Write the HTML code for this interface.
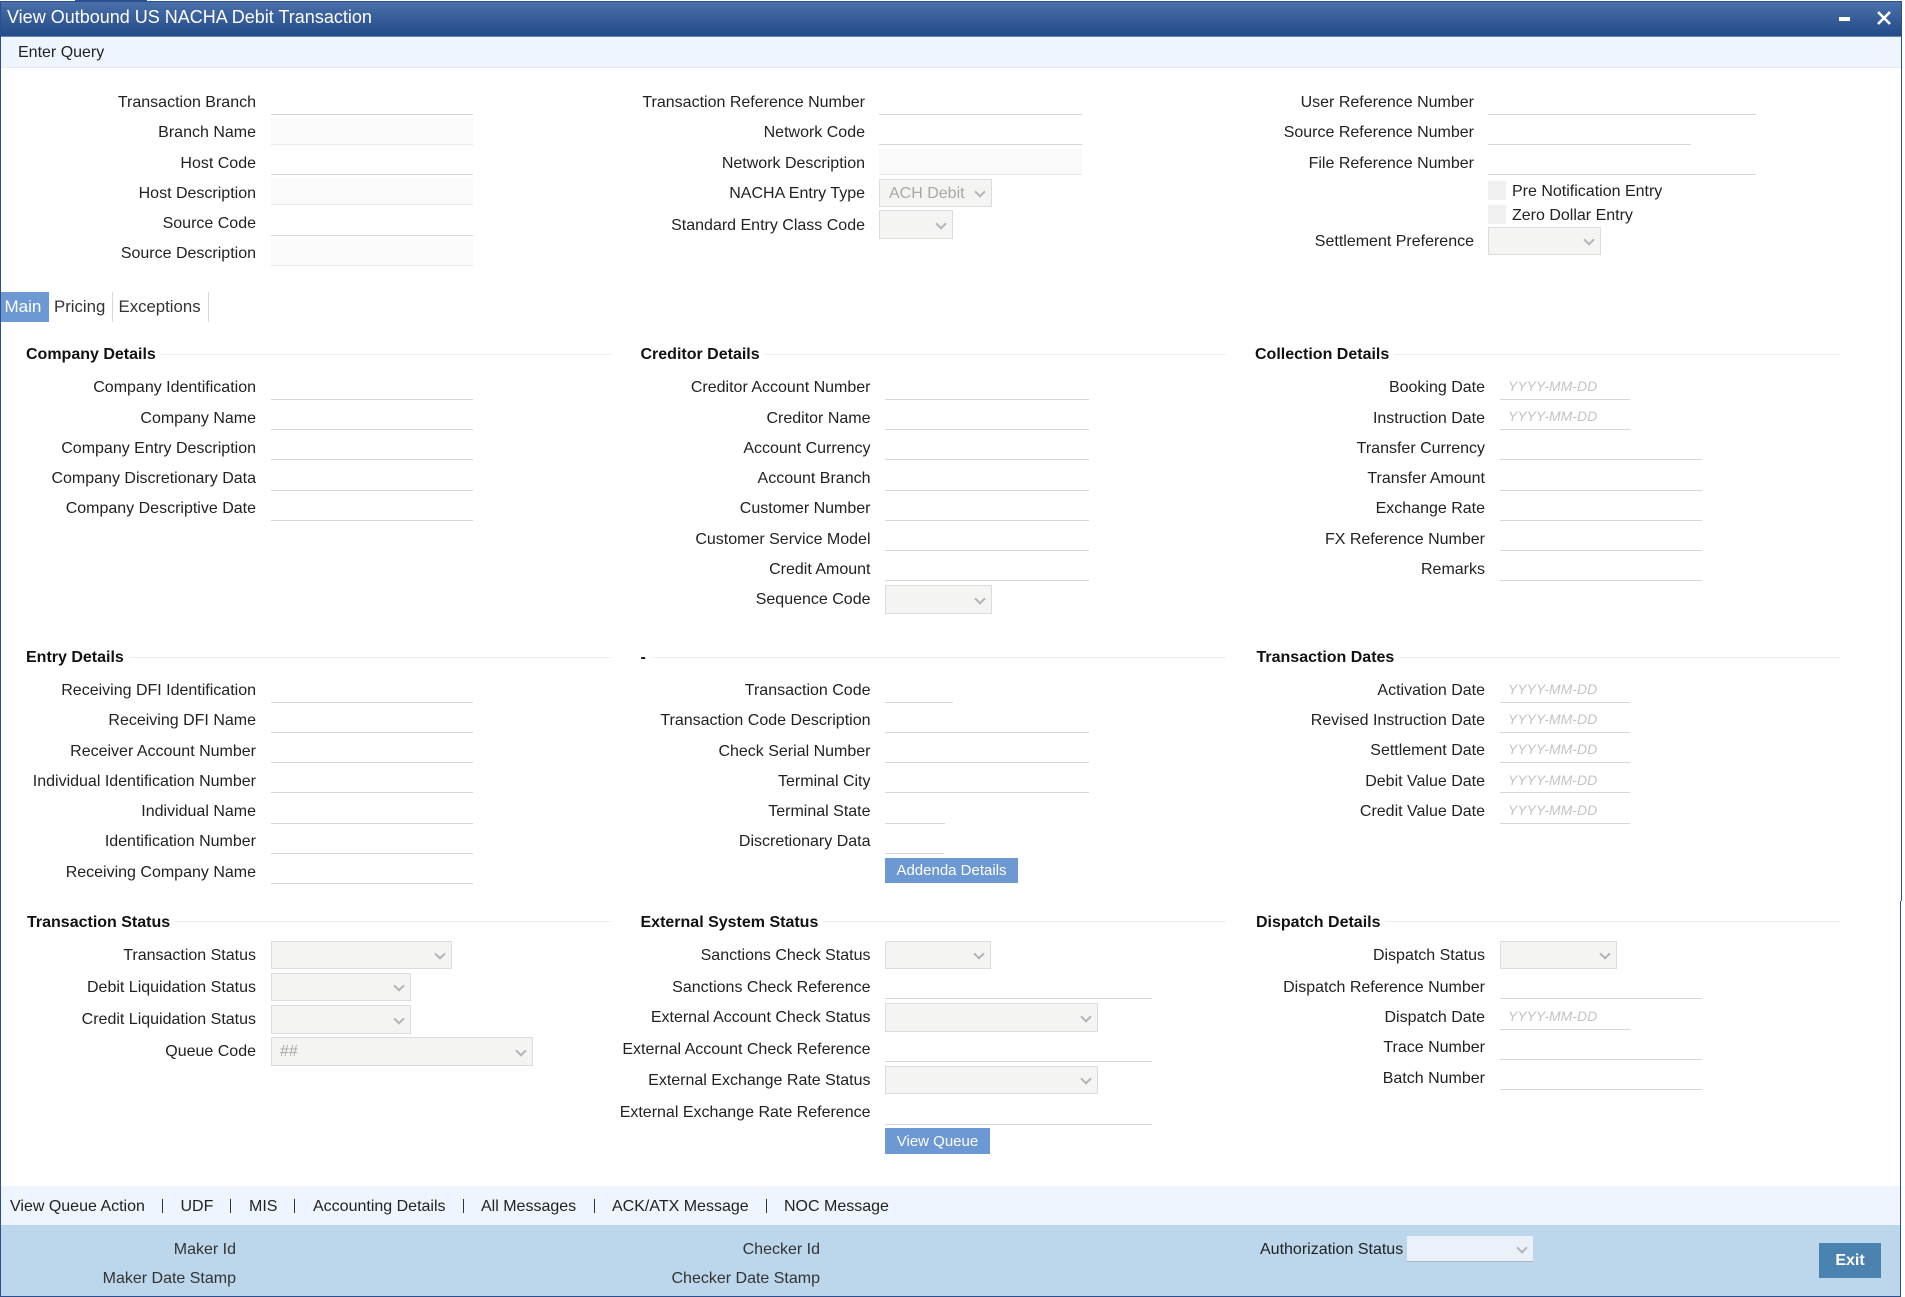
<!DOCTYPE html>
<html lang="en">
<head>
<meta charset="utf-8">
<title>View Outbound US NACHA Debit Transaction</title>
<style>
html,body{margin:0;padding:0;background:#fff}
body{position:relative;width:1905px;height:1297px;overflow:hidden;font-family:"Liberation Sans",Arial,sans-serif;font-size:16px;color:#222}
div{position:absolute;box-sizing:border-box}
.l{white-space:nowrap;line-height:20px;height:20px;margin-top:2px}
.a{right:1649px}.m{right:1034.5px}.k{right:420px}.o{right:1040px}.w{right:431px}
.i{height:1px;background:#d6d6d6}
.x1{left:271px;width:202px}
.x2{left:879px;width:203px}
.x3{left:1488px;width:268px}
.y1{left:885px;width:204px}
.y2{left:1500px;width:202px}
.d{left:1500px;width:130px}
.f{left:271px;width:202px;background:#fafafa}
.s{background:#f4f4f2;border:1px solid #dcdcdc}
.s::after{content:"";position:absolute;right:7px;top:50%;width:6px;height:6px;margin-top:-5px;border-right:2px solid #b0b5b5;border-bottom:2px solid #b0b5b5;transform:rotate(45deg)}
.h{font-weight:bold;line-height:20px;height:20px;white-space:nowrap;background:#fff;padding-right:5px;color:#111;margin-top:2px}
.r{height:1px;background:#eeeeee}
.p{left:1508px;font-style:italic;font-size:14px;color:#c4c4c4;line-height:20px;height:20px;white-space:nowrap}
.t{color:#fff;background:#6c98d3;font-size:15px;text-align:center;line-height:25px}
.q{font-size:16px;line-height:20px;height:20px;top:1197px;white-space:nowrap;color:#222}
.v{top:1199px;width:1px;height:14px;background:#333}
.g{color:#a8a8a8;white-space:nowrap}
.bl{color:#333}
</style>
</head>
<body>

<!-- window frame -->
<div style="left:0;top:1px;width:1902px;height:36px;background:linear-gradient(#4a70a9,#234a8a);border-top:1px solid #2a4f8e;border-bottom:1px solid #6d8aa8"></div>
<div style="left:75px;top:0;width:72px;height:1px;background:#2a4f8e"></div>
<div style="left:7px;top:6px;font-size:18px;line-height:22px;color:#fff;white-space:nowrap">View Outbound US NACHA Debit Transaction</div>
<div style="left:1839px;top:17px;width:11px;height:4px;background:#fff"></div>
<svg style="position:absolute;left:1875px;top:10px" width="16" height="16" viewBox="0 0 16 16"><path d="M3 2L15 14M15 2L3 14" stroke="#fff" stroke-width="2.6" fill="none"/></svg>

<div style="left:0;top:37px;width:1902px;height:31px;background:#eef5fe;border-bottom:1px solid #e6e9ee"></div>
<div style="left:18px;top:43px;line-height:20px;white-space:nowrap">Enter Query</div>

<!-- top col 1 -->
<div class="l a" style="top:91px">Transaction Branch</div><div class="i x1" style="top:114px"></div>
<div class="f" style="top:118px;height:27px"></div><div class="i x1" style="top:144px;background:#e9e9e9"></div>
<div class="l a" style="top:121px">Branch Name</div>
<div class="l a" style="top:152px">Host Code</div><div class="i x1" style="top:174px"></div>
<div class="f" style="top:179px;height:26px"></div><div class="i x1" style="top:204px;background:#e9e9e9"></div>
<div class="l a" style="top:182px">Host Description</div>
<div class="l a" style="top:212px">Source Code</div><div class="i x1" style="top:235px"></div>
<div class="f" style="top:239px;height:27px"></div><div class="i x1" style="top:265px;background:#e9e9e9"></div>
<div class="l a" style="top:242px">Source Description</div>

<!-- top col 2 -->
<div class="l o" style="top:91px">Transaction Reference Number</div><div class="i x2" style="top:114px"></div>
<div class="l o" style="top:121px">Network Code</div><div class="i x2" style="top:144px"></div>
<div class="l o" style="top:152px">Network Description</div>
<div class="x2" style="top:149px;height:26px;background:#fafafa"></div><div class="i x2" style="top:174px;background:#e9e9e9"></div>
<div class="l o" style="top:182px">NACHA Entry Type</div>
<div class="s g" style="left:879px;top:179px;width:113px;height:28px;padding-left:9px;line-height:27px">ACH Debit</div>
<div class="l o" style="top:214px">Standard Entry Class Code</div>
<div class="s" style="left:879px;top:210px;width:74px;height:29px"></div>

<!-- top col 3 -->
<div class="l w" style="top:91px">User Reference Number</div><div class="i x3" style="top:114px"></div>
<div class="l w" style="top:121px">Source Reference Number</div><div class="i" style="left:1488px;width:203px;top:144px"></div>
<div class="l w" style="top:152px">File Reference Number</div><div class="i x3" style="top:174px"></div>
<div style="left:1488px;top:181px;width:18px;height:19px;background:#f1f1f1"></div>
<div class="l" style="left:1512px;top:180px">Pre Notification Entry</div>
<div style="left:1488px;top:205px;width:18px;height:19px;background:#f1f1f1"></div>
<div class="l" style="left:1512px;top:204px">Zero Dollar Entry</div>
<div class="l w" style="top:230px">Settlement Preference</div>
<div class="s" style="left:1488px;top:227px;width:113px;height:28px"></div>

<!-- tabs -->
<div style="left:1px;top:292px;width:48px;height:30px;background:#6c98d3;color:#fff;font-size:17px;padding-left:3.5px;line-height:30px">Main</div>
<div class="l" style="left:54px;top:295px;color:#333;font-size:16.8px">Pricing</div>
<div style="left:112px;top:292px;width:1px;height:30px;background:#d8d8d8"></div>
<div class="l" style="left:118.5px;top:295px;color:#333;font-size:16.8px">Exceptions</div>
<div style="left:208px;top:292px;width:1px;height:30px;background:#d8d8d8"></div>

<!-- row 1 rules -->
<div class="r" style="left:26px;width:585px;top:354px"></div>
<div class="r" style="left:641px;width:585px;top:354px"></div>
<div class="r" style="left:1256px;width:584px;top:354px"></div>
<div class="h" style="left:26px;top:343px">Company Details</div>
<div class="h" style="left:640.5px;top:343px">Creditor Details</div>
<div class="h" style="left:1255px;top:343px">Collection Details</div>

<!-- Company -->
<div class="l a" style="top:376px">Company Identification</div><div class="i x1" style="top:399px"></div>
<div class="l a" style="top:407px">Company Name</div><div class="i x1" style="top:429px"></div>
<div class="l a" style="top:437px">Company Entry Description</div><div class="i x1" style="top:459px"></div>
<div class="l a" style="top:467px">Company Discretionary Data</div><div class="i x1" style="top:490px"></div>
<div class="l a" style="top:497px">Company Descriptive Date</div><div class="i x1" style="top:520px"></div>

<!-- Creditor -->
<div class="l m" style="top:376px">Creditor Account Number</div><div class="i y1" style="top:399px"></div>
<div class="l m" style="top:407px">Creditor Name</div><div class="i y1" style="top:429px"></div>
<div class="l m" style="top:437px">Account Currency</div><div class="i y1" style="top:459px"></div>
<div class="l m" style="top:467px">Account Branch</div><div class="i y1" style="top:490px"></div>
<div class="l m" style="top:497px">Customer Number</div><div class="i y1" style="top:520px"></div>
<div class="l m" style="top:528px">Customer Service Model</div><div class="i y1" style="top:550px"></div>
<div class="l m" style="top:558px">Credit Amount</div><div class="i y1" style="top:580px"></div>
<div class="l m" style="top:588px">Sequence Code</div>
<div class="s" style="left:885px;top:585px;width:107px;height:29px"></div>

<!-- Collection -->
<div class="l k" style="top:376px">Booking Date</div><div class="p" style="top:376px">YYYY-MM-DD</div><div class="i d" style="top:399px"></div>
<div class="l k" style="top:407px">Instruction Date</div><div class="p" style="top:406px">YYYY-MM-DD</div><div class="i d" style="top:429px"></div>
<div class="l k" style="top:437px">Transfer Currency</div><div class="i y2" style="top:459px"></div>
<div class="l k" style="top:467px">Transfer Amount</div><div class="i y2" style="top:490px"></div>
<div class="l k" style="top:497px">Exchange Rate</div><div class="i y2" style="top:520px"></div>
<div class="l k" style="top:528px">FX Reference Number</div><div class="i y2" style="top:550px"></div>
<div class="l k" style="top:558px">Remarks</div><div class="i y2" style="top:580px"></div>

<!-- row 2 rules -->
<div class="r" style="left:26px;width:585px;top:657px"></div>
<div class="r" style="left:641px;width:585px;top:657px"></div>
<div class="r" style="left:1257px;width:583px;top:657px"></div>
<div class="h" style="left:26px;top:646px">Entry Details</div>
<div class="h" style="left:640.5px;top:646px">-</div>
<div class="h" style="left:1256.5px;top:646px">Transaction Dates</div>

<!-- Entry -->
<div class="l a" style="top:679px">Receiving DFI Identification</div><div class="i x1" style="top:702px"></div>
<div class="l a" style="top:709px">Receiving DFI Name</div><div class="i x1" style="top:732px"></div>
<div class="l a" style="top:740px">Receiver Account Number</div><div class="i x1" style="top:762px"></div>
<div class="l a" style="top:770px">Individual Identification Number</div><div class="i x1" style="top:792px"></div>
<div class="l a" style="top:800px">Individual Name</div><div class="i x1" style="top:823px"></div>
<div class="l a" style="top:830px">Identification Number</div><div class="i x1" style="top:853px"></div>
<div class="l a" style="top:861px">Receiving Company Name</div><div class="i x1" style="top:883px"></div>

<!-- Middle -->
<div class="l m" style="top:679px">Transaction Code</div><div class="i" style="left:885px;width:68px;top:702px"></div>
<div class="l m" style="top:709px">Transaction Code Description</div><div class="i y1" style="top:732px"></div>
<div class="l m" style="top:740px">Check Serial Number</div><div class="i y1" style="top:762px"></div>
<div class="l m" style="top:770px">Terminal City</div><div class="i y1" style="top:792px"></div>
<div class="l m" style="top:800px">Terminal State</div><div class="i" style="left:885px;width:60px;top:823px"></div>
<div class="l m" style="top:830px">Discretionary Data</div><div class="i" style="left:885px;width:59px;top:853px"></div>
<div class="t" style="left:885px;top:858px;width:133px;height:25px">Addenda Details</div>

<!-- Transaction Dates -->
<div class="l k" style="top:679px">Activation Date</div><div class="p" style="top:679px">YYYY-MM-DD</div><div class="i d" style="top:702px"></div>
<div class="l k" style="top:709px">Revised Instruction Date</div><div class="p" style="top:709px">YYYY-MM-DD</div><div class="i d" style="top:732px"></div>
<div class="l k" style="top:739px">Settlement Date</div><div class="p" style="top:739px">YYYY-MM-DD</div><div class="i d" style="top:762px"></div>
<div class="l k" style="top:770px">Debit Value Date</div><div class="p" style="top:770px">YYYY-MM-DD</div><div class="i d" style="top:792px"></div>
<div class="l k" style="top:800px">Credit Value Date</div><div class="p" style="top:800px">YYYY-MM-DD</div><div class="i d" style="top:823px"></div>

<!-- row 3 rules -->
<div class="r" style="left:27px;width:584px;top:921px"></div>
<div class="r" style="left:641px;width:585px;top:921px"></div>
<div class="r" style="left:1256px;width:584px;top:921px"></div>
<div class="h" style="left:27px;top:911px">Transaction Status</div>
<div class="h" style="left:640.5px;top:911px">External System Status</div>
<div class="h" style="left:1256px;top:911px">Dispatch Details</div>

<!-- Transaction Status -->
<div class="l a" style="top:944px">Transaction Status</div>
<div class="s" style="left:271px;top:941px;width:181px;height:28px"></div>
<div class="l a" style="top:976px">Debit Liquidation Status</div>
<div class="s" style="left:271px;top:973px;width:140px;height:28px"></div>
<div class="l a" style="top:1008px">Credit Liquidation Status</div>
<div class="s" style="left:271px;top:1005px;width:140px;height:29px"></div>
<div class="l a" style="top:1040px">Queue Code</div>
<div class="s g" style="left:271px;top:1037px;width:262px;height:29px;padding-left:8px;line-height:27px">##</div>

<!-- External System -->
<div class="l m" style="top:944px">Sanctions Check Status</div>
<div class="s" style="left:885px;top:941px;width:106px;height:28px"></div>
<div class="l m" style="top:976px">Sanctions Check Reference</div><div class="i" style="left:885px;width:267px;top:998px"></div>
<div class="l m" style="top:1006px">External Account Check Status</div>
<div class="s" style="left:885px;top:1003px;width:213px;height:29px"></div>
<div class="l m" style="top:1038px">External Account Check Reference</div><div class="i" style="left:885px;width:267px;top:1061px"></div>
<div class="l m" style="top:1069px">External Exchange Rate Status</div>
<div class="s" style="left:885px;top:1066px;width:213px;height:28px"></div>
<div class="l m" style="top:1101px">External Exchange Rate Reference</div><div class="i" style="left:885px;width:267px;top:1124px"></div>
<div class="t" style="left:885px;top:1128px;width:105px;height:26px;line-height:27px">View Queue</div>

<!-- Dispatch -->
<div class="l k" style="top:944px">Dispatch Status</div>
<div class="s" style="left:1500px;top:941px;width:117px;height:28px"></div>
<div class="l k" style="top:976px">Dispatch Reference Number</div><div class="i y2" style="top:998px"></div>
<div class="l k" style="top:1006px">Dispatch Date</div><div class="p" style="top:1006px">YYYY-MM-DD</div><div class="i d" style="top:1029px"></div>
<div class="l k" style="top:1036px">Trace Number</div><div class="i y2" style="top:1059px"></div>
<div class="l k" style="top:1067px">Batch Number</div><div class="i y2" style="top:1089px"></div>

<!-- footer links -->
<div style="left:0;top:1186px;width:1900px;height:39px;background:#eef5fe"></div>
<div class="q" style="left:10px">View Queue Action</div>
<div class="v" style="left:162px"></div>
<div class="q" style="left:180.5px">UDF</div>
<div class="v" style="left:230px"></div>
<div class="q" style="left:249px">MIS</div>
<div class="v" style="left:294px"></div>
<div class="q" style="left:313px">Accounting Details</div>
<div class="v" style="left:463px"></div>
<div class="q" style="left:481px">All Messages</div>
<div class="v" style="left:594px"></div>
<div class="q" style="left:612px">ACK/ATX Message</div>
<div class="v" style="left:766px"></div>
<div class="q" style="left:784px">NOC Message</div>

<!-- footer band -->
<div style="left:0;top:1225px;width:1900px;height:72px;background:#bcd7ec;border-bottom:1px solid #2a4f8e"></div>
<div class="l bl" style="right:1669px;top:1238px">Maker Id</div>
<div class="l bl" style="right:1669px;top:1267px">Maker Date Stamp</div>
<div class="l bl" style="right:1085px;top:1238px">Checker Id</div>
<div class="l bl" style="right:1085px;top:1267px">Checker Date Stamp</div>
<div class="l" style="left:1260px;top:1238px">Authorization Status</div>
<div class="s" style="left:1407px;top:1236px;width:126px;height:26px;background:#eaf1f9;border:0;border-bottom:1px solid #aab4bc"></div>
<div style="left:1819px;top:1243px;width:62px;height:35px;background:#4a82b0;color:#fff;font-weight:bold;text-align:center;line-height:35px">Exit</div>

<!-- side borders -->
<div style="left:0;top:1px;width:1px;height:1296px;background:#2a4f8e"></div>
<div style="left:1901px;top:1px;width:1px;height:900px;background:#2a4f8e"></div>
<div style="left:1900px;top:901px;width:1px;height:396px;background:#2a4f8e"></div>

</body>
</html>
